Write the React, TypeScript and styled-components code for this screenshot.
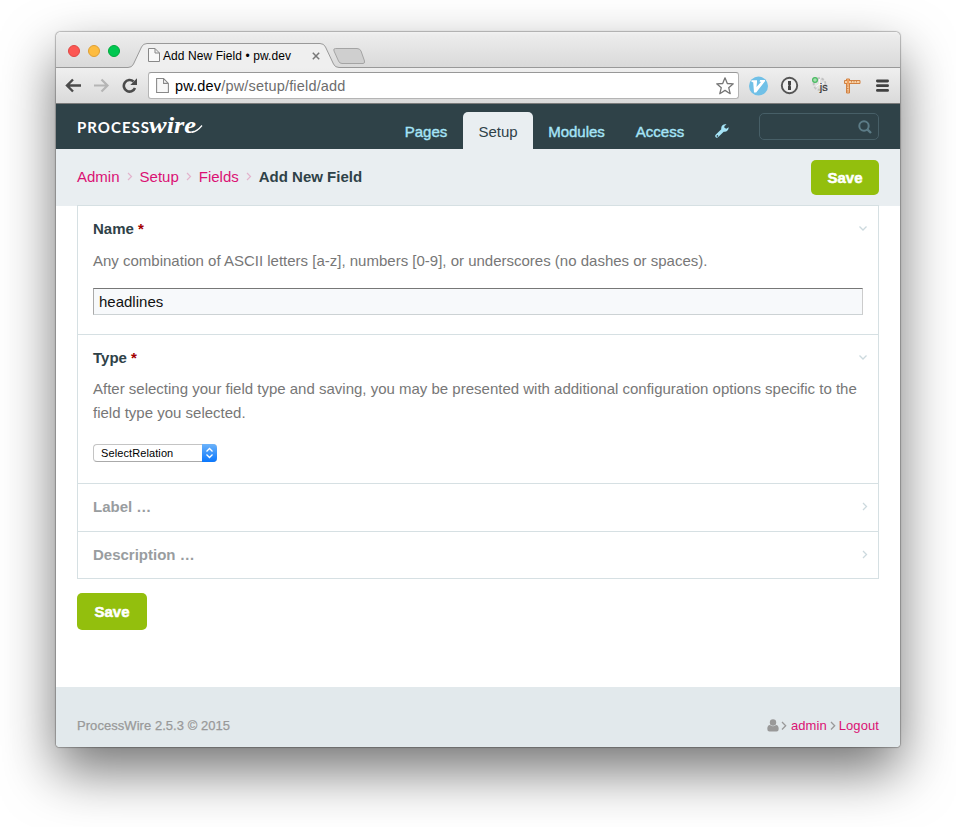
import React from "react";
import styled, { createGlobalStyle } from "styled-components";

const GlobalStyle = createGlobalStyle`
  * { box-sizing: border-box; }
  body {
    margin: 0;
    background: #fff;
    font-family: "Liberation Sans", Arial, sans-serif;
    overflow: hidden;
  }
`;

const Desktop = styled.div`
  height: 827px;
  padding: 32px 56px 0;
  overflow: hidden;
`;

const Window = styled.div`
  width: 844px;
  height: 715px;
  display: flex;
  flex-direction: column;
  background: #fff;
  border-radius: 5px 5px 4px 4px;
  box-shadow: 0 0 1px 0.5px rgba(0, 0, 0, 0.25), 0 24px 54px rgba(0, 0, 0, 0.55);
  overflow: hidden;
`;

const TitleBar = styled.div`
  position: relative;
  flex: none;
  height: 36px;
  display: flex;
  background: linear-gradient(#f2f2f2, #ececec 3px, #dadada 34px);
`;

const TabShape = styled.svg`
  position: absolute;
  left: 0;
  top: 0;
`;

const Lights = styled.div`
  display: flex;
  gap: 8px;
  width: 92px;
  padding: 13px 0 0 12px;
`;

const Light = styled.span<{ $fill: string; $edge: string }>`
  width: 12px;
  height: 12px;
  border-radius: 50%;
  background: ${(p) => p.$fill};
  border: 0.5px solid ${(p) => p.$edge};
`;

const TabContent = styled.div`
  position: relative;
  display: flex;
  width: 175px;
  padding-top: 16px;
`;

const TabTitle = styled.span`
  width: 149px;
  margin-left: 3px;
  font: 12px/16px "Liberation Sans", sans-serif;
  letter-spacing: 0.08px;
  color: #000;
  white-space: nowrap;
`;

const Toolbar = styled.div`
  flex: none;
  height: 36px;
  display: flex;
  align-items: center;
  background: linear-gradient(#efefef, #dadada);
  border-bottom: 1px solid #7b7b7b;
`;

const NavIcons = styled.div`
  display: flex;
  align-items: center;
  gap: 12px;
  width: 92px;
  padding-left: 9px;
`;

const AddressBar = styled.div`
  width: 591px;
  height: 27px;
  display: flex;
  align-items: center;
  padding: 0 4px 0 7px;
  background: #fff;
  border: 1px solid #b4b4b4;
  border-top-color: #989898;
  border-radius: 3px;
`;

const Url = styled.span`
  flex: 1;
  margin-left: 6px;
  font-size: 14.5px;
  letter-spacing: 0.18px;
  color: #6d6d6d;
  b {
    font-weight: 400;
    color: #000;
  }
`;

const Extensions = styled.div`
  flex: 1;
  display: flex;
  align-items: center;
  gap: 12px;
  padding-left: 9px;
`;

const Masthead = styled.div`
  flex: none;
  height: 45px;
  display: flex;
  align-items: flex-end;
  padding: 0 21px;
  background: #2f4248;
`;

const Logo = styled.svg`
  width: 130px;
  height: 32px;
  margin-bottom: 6px;
  flex: none;
  overflow: visible;
`;

const Menu = styled.nav`
  flex: 1;
  display: flex;
  justify-content: flex-end;
  align-items: flex-end;
`;

const MenuItem = styled.a<{ $active?: boolean; $width: number }>`
  width: ${(p) => p.$width}px;
  height: 37px;
  border-radius: 5px 5px 0 0;
  text-align: center;
  font-size: 15px;
  line-height: 39px;
  color: ${(p) => (p.$active ? "#2f4248" : "#a5e4f7")};
  background: ${(p) => (p.$active ? "#e9eef1" : "transparent")};
  -webkit-text-stroke: ${(p) => (p.$active ? "0" : "0.4px #a5e4f7")};
  svg { vertical-align: -1px; }
`;

const SearchBox = styled.div`
  width: 120px;
  height: 27px;
  margin: 0 0 9px 16px;
  display: flex;
  align-items: center;
  justify-content: flex-end;
  padding-right: 6px;
  border: 1px solid #475f67;
  border-radius: 5px;
`;

const Headline = styled.div`
  flex: none;
  height: 57px;
  display: flex;
  align-items: flex-start;
  justify-content: space-between;
  padding: 11px 21px 0;
  background: #e9eef1;
`;

const Breadcrumb = styled.div`
  display: flex;
  align-items: center;
  height: 32px;
  font-size: 15px;
  color: #db1174;
  svg { margin: 1px 7px 0; }
  b { color: #2f4248; }
`;

const Save = styled.button<{ $large?: boolean }>`
  width: ${(p) => (p.$large ? 70 : 68)}px;
  height: ${(p) => (p.$large ? 37 : 35)}px;
  padding: 0;
  border: 0;
  border-radius: 5px;
  background: #93bf0d;
  color: #fff;
  font: bold 15px "Liberation Sans", sans-serif;
  -webkit-text-stroke: 0.5px #fff;
`;

const Content = styled.main`
  flex: 1;
  padding: 0 21px;
`;

const Fields = styled.div`
  position: relative;
  margin-top: -1px;
  margin-bottom: 14px;
  border: 1px solid #d6e0e3;
  background: #fff;
`;

const Field = styled.section<{ $height: number }>`
  height: ${(p) => p.$height}px;
  padding: 10px 15px 0;
  & + & { border-top: 1px solid #d6e0e3; }
`;

const FieldHeader = styled.header<{ $muted?: boolean }>`
  display: flex;
  justify-content: space-between;
  align-items: center;
  height: 24px;
  margin-right: -6px;
  font-size: 15px;
  font-weight: bold;
  color: ${(p) => (p.$muted ? "#999d9f" : "#2f4248")};
  i { font-style: normal; color: #a30000; }
`;

const Hint = styled.p<{ $gap: number }>`
  margin: ${(p) => p.$gap}px -10px 0 0;
  font-size: 15px;
  line-height: 24px;
  color: #777;
`;

const TextInput = styled.input`
  display: block;
  width: 770px;
  height: 27px;
  margin-top: 15px;
  padding: 0 4px 0 5px;
  border: 1px solid #ccc;
  border-top-color: #777;
  border-left-color: #aaa;
  border-bottom-color: #ccd2d4;
  background: #f7f9fb;
  color: #111;
  font: 15px "Liberation Sans", sans-serif;
`;

const Select = styled.div`
  width: 124px;
  height: 18px;
  margin-top: 19px;
  display: flex;
  border: 1px solid #c4c4c4;
  border-bottom-color: #aaa;
  border-right: 0;
  border-radius: 4px;
  background: #fff;
  font-size: 11px;
  line-height: 17px;
  color: #000;
  letter-spacing: 0.1px;
  span { flex: 1; padding-left: 7px; }
`;

const Stepper = styled.div`
  width: 15px;
  height: 18px;
  margin-top: -1px;
  display: flex;
  align-items: center;
  justify-content: center;
  border-radius: 0 4px 4px 0;
  background: linear-gradient(#6cb3fa, #0a77fd);
`;

const Footer = styled.footer`
  flex: none;
  height: 60px;
  display: flex;
  justify-content: space-between;
  padding: 31px 21px 0;
  background: #e2e9ec;
  font-size: 13px;
  line-height: 16px;
  color: #999;
  > span {
    letter-spacing: 0.05px;
    -webkit-text-stroke: 0.25px #999;
  }
`;

const UserLinks = styled.div`
  display: flex;
  align-items: center;
  height: 16px;
  color: #db1174;
  letter-spacing: 0.08px;
`;

const PageIcon = ({ size = 14 }: { size?: number }) => (
  <svg width={size - 2} height={size} viewBox="0 0 12 14" fill="#f8f8f8" stroke="#888">
    <path d="M1 .5h6L11.5 5v8.5H.5V.5zM7 .5V5h4.5" />
  </svg>
);

const Chevron = ({ color = "#e3b3cd" }: { color?: string }) => (
  <svg width="6" height="9" viewBox="0 0 6 9" fill="none" stroke={color} strokeWidth="1.2">
    <path d="M1 1l3.5 3.5L1 8" />
  </svg>
);

const Toggle = ({ open }: { open?: boolean }) => (
  <svg width="10" height="10" viewBox="0 0 10 10" fill="none" stroke="#ccd9de" strokeWidth="1.3">
    <path d={open ? "M.5 3.5L4 7l3.500-3.500" : "M4 2L7.500 5.500 4 9"} />
  </svg>
);

export default function App() {
  return (
    <Desktop>
      <GlobalStyle />
      <Window>
        <TitleBar>
          <TabShape width="844" height="36" viewBox="0 0 844 36" fill="none">
            <path d="M0 35.5H72Q76 35.5 77.5 32L85.500 15Q87 11.500 91 11.500H264Q268 11.500 269.500 15L277.500 32Q279 35.500 283 35.500H844V36H0Z" fill="#efefef" />
            <path d="M0 35.500H72Q76 35.500 77.500 32L85.500 15Q87 11.500 91 11.500H264Q268 11.500 269.500 15L277.500 32Q279 35.500 283 35.500H844" stroke="#999" />
            <path d="M279.500 16.500H301Q304 16.500 305 19L308.500 29Q309 31.500 307 31.500H286Q283.500 31.500 282.500 29L278 19Q277 16.500 279.500 16.500Z" fill="#cfcfcf" stroke="#a4a4a4" />
          </TabShape>
          <Lights>
            <Light $fill="#fc5753" $edge="#df4744" />
            <Light $fill="#fdbc40" $edge="#de9f34" />
            <Light $fill="#00c851" $edge="#00a93c" />
          </Lights>
          <TabContent>
            <PageIcon />
            <TabTitle>Add New Field • pw.dev</TabTitle>
            <svg width="8" height="16" viewBox="0 0 8 16" stroke="#777" strokeWidth="1.5">
              <path d="M.8 4.800l6.400 6.400M7.200 4.800L.8 11.200" />
            </svg>
          </TabContent>
        </TitleBar>
        <Toolbar>
          <NavIcons>
            <svg width="17" height="16" viewBox="0 0 17 16" fill="none" stroke="#4b4b4b" strokeWidth="2.4">
              <path d="M16 7.500H2.500M8 1.500L2 7.500l6 6" />
            </svg>
            <svg width="16" height="16" viewBox="0 0 16 16" fill="none" stroke="#b5b5b5" strokeWidth="2.200">
              <path d="M0 7.500h13M7.500 1.500l6 6-6 6" />
            </svg>
            <svg width="16" height="16" viewBox="0 0 16 16" fill="none" stroke="#4b4b4b" strokeWidth="2.600">
              <path d="M13 10A5.800 5.800 0 1 1 11.500 3.500" />
              <path d="M15 .3V7H8.300Z" fill="#4b4b4b" stroke="none" />
            </svg>
          </NavIcons>
          <AddressBar>
            <PageIcon size={15} />
            <Url><b>pw.dev</b>/pw/setup/field/add</Url>
            <svg width="18" height="18" viewBox="0 0 18 18" fill="#fff" stroke="#777" strokeWidth="1.300" strokeLinejoin="round">
              <path d="M9 .8l2.300 5.700 6 .3-4.600 3.900 1.500 6L9 13.400l-5.200 3.300 1.500-6L.7 6.800l6-.3z" />
            </svg>
          </AddressBar>
          <Extensions>
            <svg width="20" height="20" viewBox="0 0 20 20">
              <circle cx="10.500" cy="10" r="9.500" fill="#70c0e7" />
              <path d="M3.500 4.300H9V6L8.500 11 13 6l-1.500-.5.7-1.500H17v1.300L8.200 16.500H6L5.200 6.300 3.500 6z" fill="#fff" />
            </svg>
            <svg width="19" height="19" viewBox="0 0 19 19">
              <circle cx="9.500" cy="9.500" r="7.700" fill="#eee" stroke="#555" strokeWidth="1.900" />
              <path d="M8 5h3v4l-.7.7.7.7V14H8v-4l.7-.7L8 8.600z" fill="#444" />
            </svg>
            <svg width="20" height="20" viewBox="0 0 20 20">
              <circle cx="8.500" cy="8" r="5.800" fill="#e2e2e2" stroke="#c2c2c2" strokeWidth="2" strokeDasharray="2.500 1.600" />
              <path d="M8.500 8V3M8.500 8l5-1M8.500 8l-4 3M8.500 8l2 4" fill="none" stroke="#f8f8f8" />
              <circle cx="4" cy="4" r="2.400" fill="#a7dfb0" stroke="#48b961" strokeWidth="1.200" />
              <text x="8.800" y="14.500" fontFamily="Liberation Sans" fontSize="11" fill="#333" stroke="#333" strokeWidth=".2">js</text>
            </svg>
            <svg width="18" height="18" viewBox="0 0 18 18">
              <path d="M3.500 2h3v14h-3z" fill="#f4c08d" stroke="#d18142" />
              <path d="M1.500 3.500H17v3H1.500z" fill="#f8d1a6" stroke="#d18142" />
              <path d="M4 2.500h2v5H4z" fill="#ef9d5a" />
              <path d="M8.500 4v1.500M11 4v1.500M13.500 4v1.500M4 9h1.500M4 11.500h1.500M4 14h1.500" stroke="#c8783c" strokeWidth=".8" />
            </svg>
            <svg width="17" height="14" viewBox="0 0 17 14" stroke="#414141" strokeWidth="2.800" strokeLinecap="round">
              <path d="M4.400 2h10.200M4.400 6.700h10.200M4.400 11.400h10.200" />
            </svg>
          </Extensions>
        </Toolbar>
        <Masthead>
          <Logo viewBox="0 0 130 32" fill="#fff">
            <text x="0" y="22" fontFamily="Lato" fontSize="15" fontWeight="700" textLength="72" lengthAdjust="spacing">PROCESS</text>
            <text x="72" y="22" fontFamily="Liberation Serif" fontStyle="italic" fontWeight="700" fontSize="23" textLength="47" lengthAdjust="spacingAndGlyphs">wire</text>
            <path d="M115 21.300Q120 20.500 125 14.500" fill="none" stroke="#fff" strokeWidth="1.200" />
          </Logo>
          <Menu>
            <MenuItem $width={74}>Pages</MenuItem>
            <MenuItem $width={70} $active>Setup</MenuItem>
            <MenuItem $width={87}>Modules</MenuItem>
            <MenuItem $width={80}>Access</MenuItem>
            <MenuItem $width={43}>
              <svg width="14" height="14" viewBox="0 0 14 14" fill="#a5e4f7">
                <path d="M13.600 3.200L11.300 4.800 9.400 3.800V2L11.500.4C9.500-.4 6.200.8 6.200 4.200L6.300 5.200.9 10.500Q-.5 12 .7 13.200 2 14.400 3.300 13.100L8.700 7.700C11.500 8.400 14 6 13.600 3.200ZM2.100 11.200a.8.8 0 1 1 0 1.500.8.8 0 0 1 0-1.500Z" />
              </svg>
            </MenuItem>
            <SearchBox>
              <svg width="14" height="14" viewBox="0 0 14 14" fill="none" stroke="#5c7c87" strokeWidth="2">
                <circle cx="6" cy="6" r="4.700" />
                <path d="M9.300 9.300l3.700 3.700" strokeWidth="2.400" />
              </svg>
            </SearchBox>
          </Menu>
        </Masthead>
        <Headline>
          <Breadcrumb>
            Admin <Chevron /> Setup <Chevron /> Fields <Chevron /> <b>Add New Field</b>
          </Breadcrumb>
          <Save>Save</Save>
        </Headline>
        <Content>
          <Fields>
            <Field $height={128}>
              <FieldHeader><span>Name <i>*</i></span><Toggle open /></FieldHeader>
              <Hint $gap={9}>Any combination of ASCII letters [a-z], numbers [0-9], or underscores (no dashes or spaces).</Hint>
              <TextInput defaultValue="headlines" />
            </Field>
            <Field $height={149}>
              <FieldHeader><span>Type <i>*</i></span><Toggle open /></FieldHeader>
              <Hint $gap={8}>
                After selecting your field type and saving, you may be presented with additional configuration options specific to the<br />
                field type you selected.
              </Hint>
              <Select>
                <span>SelectRelation</span>
                <Stepper>
                  <svg width="9" height="12" viewBox="0 0 9 12" fill="none" stroke="#fff" strokeWidth="1.300">
                    <path d="M1.500 4.500l3-3 3 3M1.500 7.500l3 3 3-3" />
                  </svg>
                </Stepper>
              </Select>
            </Field>
            <Field $height={48}>
              <FieldHeader $muted>Label …<Toggle /></FieldHeader>
            </Field>
            <Field $height={47}>
              <FieldHeader $muted>Description …<Toggle /></FieldHeader>
            </Field>
          </Fields>
          <Save $large>Save</Save>
        </Content>
        <Footer>
          <span>ProcessWire 2.5.3 © 2015</span>
          <UserLinks>
            <svg width="24" height="14" viewBox="0 0 24 14" fill="#999">
              <path d="M3 6C1 6 .3 8 .3 10Q.3 12.500 2.500 12.500h7Q11.700 12.500 11.700 10C11.700 8 11 6 9 6 7 7.800 5 7.800 3 6Z" />
              <circle cx="6" cy="3.500" r="3.200" />
              <path d="M15 3l3.700 3.700L15 10.500" fill="none" stroke="#999" strokeWidth="1.300" />
            </svg>
            admin
            <svg width="12" height="14" viewBox="0 0 12 14" fill="none" stroke="#999" strokeWidth="1.300">
              <path d="M4 3l3.700 3.700L4 10.500" />
            </svg>
            Logout
          </UserLinks>
        </Footer>
      </Window>
    </Desktop>
  );
}
